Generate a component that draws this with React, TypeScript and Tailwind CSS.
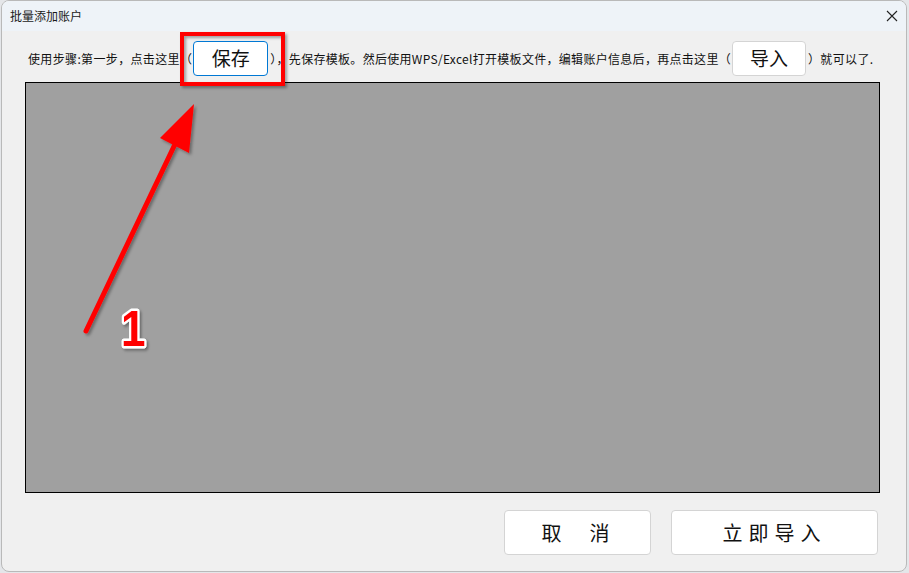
const FONT = "font-['Noto_Sans_CJK_SC','Microsoft_YaHei',sans-serif]";

type BtnProps = {
  label: string;
  className?: string;
};
const DialogButton = (props: BtnProps) => {
  const { label, className = "" } = props;
  return (
    <button
      className={`flex items-center justify-center bg-white rounded-[4px] border text-[#111] ${className}`}
    >
      {label}
    </button>
  );
};

// red annotation on top of the dialog: box around the save button, arrow, step number
const Annotation = () => {
  return (
    <svg
      className="absolute left-0 top-0 pointer-events-none"
      width={909}
      height={573}
      viewBox="0 0 909 573"
    >
      <defs>
        <filter id="sh" x="-20%" y="-20%" width="140%" height="140%">
          <feDropShadow dx="2" dy="2" stdDeviation="1.5" floodColor="#000" floodOpacity="0.35" />
        </filter>
      </defs>
      <rect x={182} y={34} width={101} height={50} fill="none" stroke="#ff0000" strokeWidth={4} filter="url(#sh)" />
      <g filter="url(#sh)">
        <line x1={86} y1={331} x2={177} y2={140} stroke="#ff0000" strokeWidth={5} strokeLinecap="round" />
        <polygon points="194,104 160,138 189,153" fill="#ff0000" />
      </g>
      <text
        x={121}
        y={346}
        fontFamily="'Liberation Sans', Arial, sans-serif"
        fontWeight={700}
        fontSize={50}
        fill="#ff0000"
        stroke="#ffffff"
        strokeWidth={5}
        strokeLinejoin="round"
        paintOrder="stroke"
        filter="url(#sh)"
        transform="translate(121 346) scale(0.88 1) translate(-121 -346)"
      >
        1
      </text>
    </svg>
  );
};

const App = () => {
  return (
    <div className={`relative w-[909px] h-[573px] overflow-hidden bg-[#e4e6e9] ${FONT}`}>
      <div className="ml-px w-[906px] h-[572px] flex flex-col bg-[#f0f0f0] border border-[#b9b9b9] rounded-lg overflow-hidden">
        {/* title bar */}
        <div className="h-[30px] shrink-0 flex items-center justify-between bg-[#eef3f8] pl-[8px] pr-[7px]">
          <span className="text-[12px] text-[#1a1a1a]">批量添加账户</span>
          <svg width="12" height="12" viewBox="0 0 12 12" className="mr-[1px]">
            <path d="M1 1 L11 11 M11 1 L1 11" stroke="#222" strokeWidth="1.1" />
          </svg>
        </div>

        {/* instruction row */}
        <div className="flex items-center h-[35px] mt-[10px] ml-[26px] text-[12px] text-[#111] whitespace-nowrap">
          <span className="tracking-[0.35px]">使用步骤:第一步，点击这里（</span>
          <DialogButton label="保存" className="w-[75px] h-[35px] ml-[1px] mr-[2px] border-[#0078d4] text-[19px]" />
          <span className="tracking-[0.3px]">），先保存模板。然后使用WPS/Excel打开模板文件，编辑账户信息后，再点击这里（</span>
          <DialogButton label="导入" className="w-[74px] h-[35px] ml-[1px] mr-[2px] border-[#d4d4d4] text-[19px]" />
          <span className="tracking-[0.35px]">）就可以了.</span>
        </div>

        {/* data area */}
        <div className="ml-[23px] mt-[6px] w-[855px] h-[411px] shrink-0 bg-[#a0a0a0] border border-black" />

        {/* bottom buttons */}
        <div className="flex justify-end gap-[20px] mt-[17px] mr-[28px]">
          <DialogButton label="取　消" className="w-[147px] h-[45px] border-[#d4d4d4] text-[20px] tracking-[4px]" />
          <DialogButton label="立即导入" className="w-[207px] h-[45px] border-[#d4d4d4] text-[20px] tracking-[6px]" />
        </div>
      </div>
      <Annotation />
    </div>
  );
};

export default App;
